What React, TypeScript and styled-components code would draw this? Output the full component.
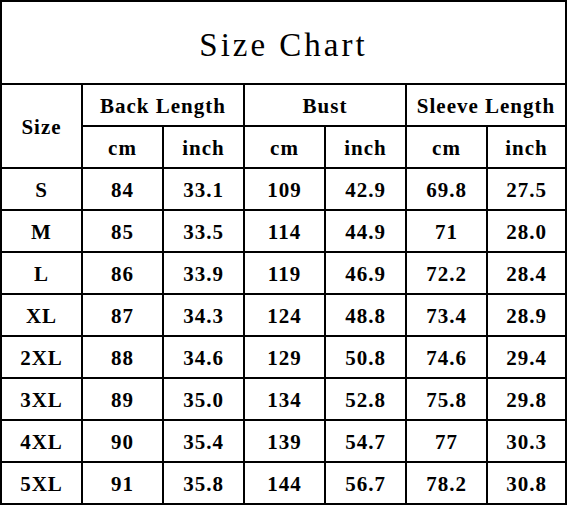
import React from 'react'
import styled, { createGlobalStyle } from 'styled-components'

const Global = createGlobalStyle`
  html, body { margin: 0; padding: 0; background: #fff; }
  body { font-family: "Liberation Serif", "Times New Roman", serif; color: #000; }
`

const Chart = styled.div`
  display: grid;
  grid-template-columns: repeat(6, 79px) 77px;
  grid-template-rows: 81px repeat(10, 40px);
  gap: 2px;
  padding: 2px;
  width: 567px;
  box-sizing: border-box;
  background: #000;
`

const Title = styled.div`
  grid-column: 1 / -1;
  background: #fff;
  display: flex;
  align-items: center;
  justify-content: center;
  padding-top: 6px;
  font-size: 33px;
  letter-spacing: 3px;
`

const Cell = styled.div<{ $col?: number; $row?: number }>`
  background: #fff;
  display: flex;
  align-items: center;
  justify-content: center;
  padding-top: 3px;
  font-size: 21px;
  font-weight: bold;
  letter-spacing: 1px;
  grid-column: span ${p => p.$col ?? 1};
  grid-row: span ${p => p.$row ?? 1};
`

const rows = [
  ['S', '84', '33.1', '109', '42.9', '69.8', '27.5'],
  ['M', '85', '33.5', '114', '44.9', '71', '28.0'],
  ['L', '86', '33.9', '119', '46.9', '72.2', '28.4'],
  ['XL', '87', '34.3', '124', '48.8', '73.4', '28.9'],
  ['2XL', '88', '34.6', '129', '50.8', '74.6', '29.4'],
  ['3XL', '89', '35.0', '134', '52.8', '75.8', '29.8'],
  ['4XL', '90', '35.4', '139', '54.7', '77', '30.3'],
  ['5XL', '91', '35.8', '144', '56.7', '78.2', '30.8'],
]

const App = () => {
  return (
    <>
      <Global />
      <Chart>
        <Title>Size Chart</Title>
        <Cell $row={2}>Size</Cell>
        <Cell $col={2}>Back Length</Cell>
        <Cell $col={2}>Bust</Cell>
        <Cell $col={2}>Sleeve Length</Cell>
        {[0, 1, 2].map(i => (
          <React.Fragment key={i}>
            <Cell>cm</Cell>
            <Cell>inch</Cell>
          </React.Fragment>
        ))}
        {rows.map(r => r.map((v, j) => <Cell key={r[0] + j}>{v}</Cell>))}
      </Chart>
    </>
  )
}

export default App
